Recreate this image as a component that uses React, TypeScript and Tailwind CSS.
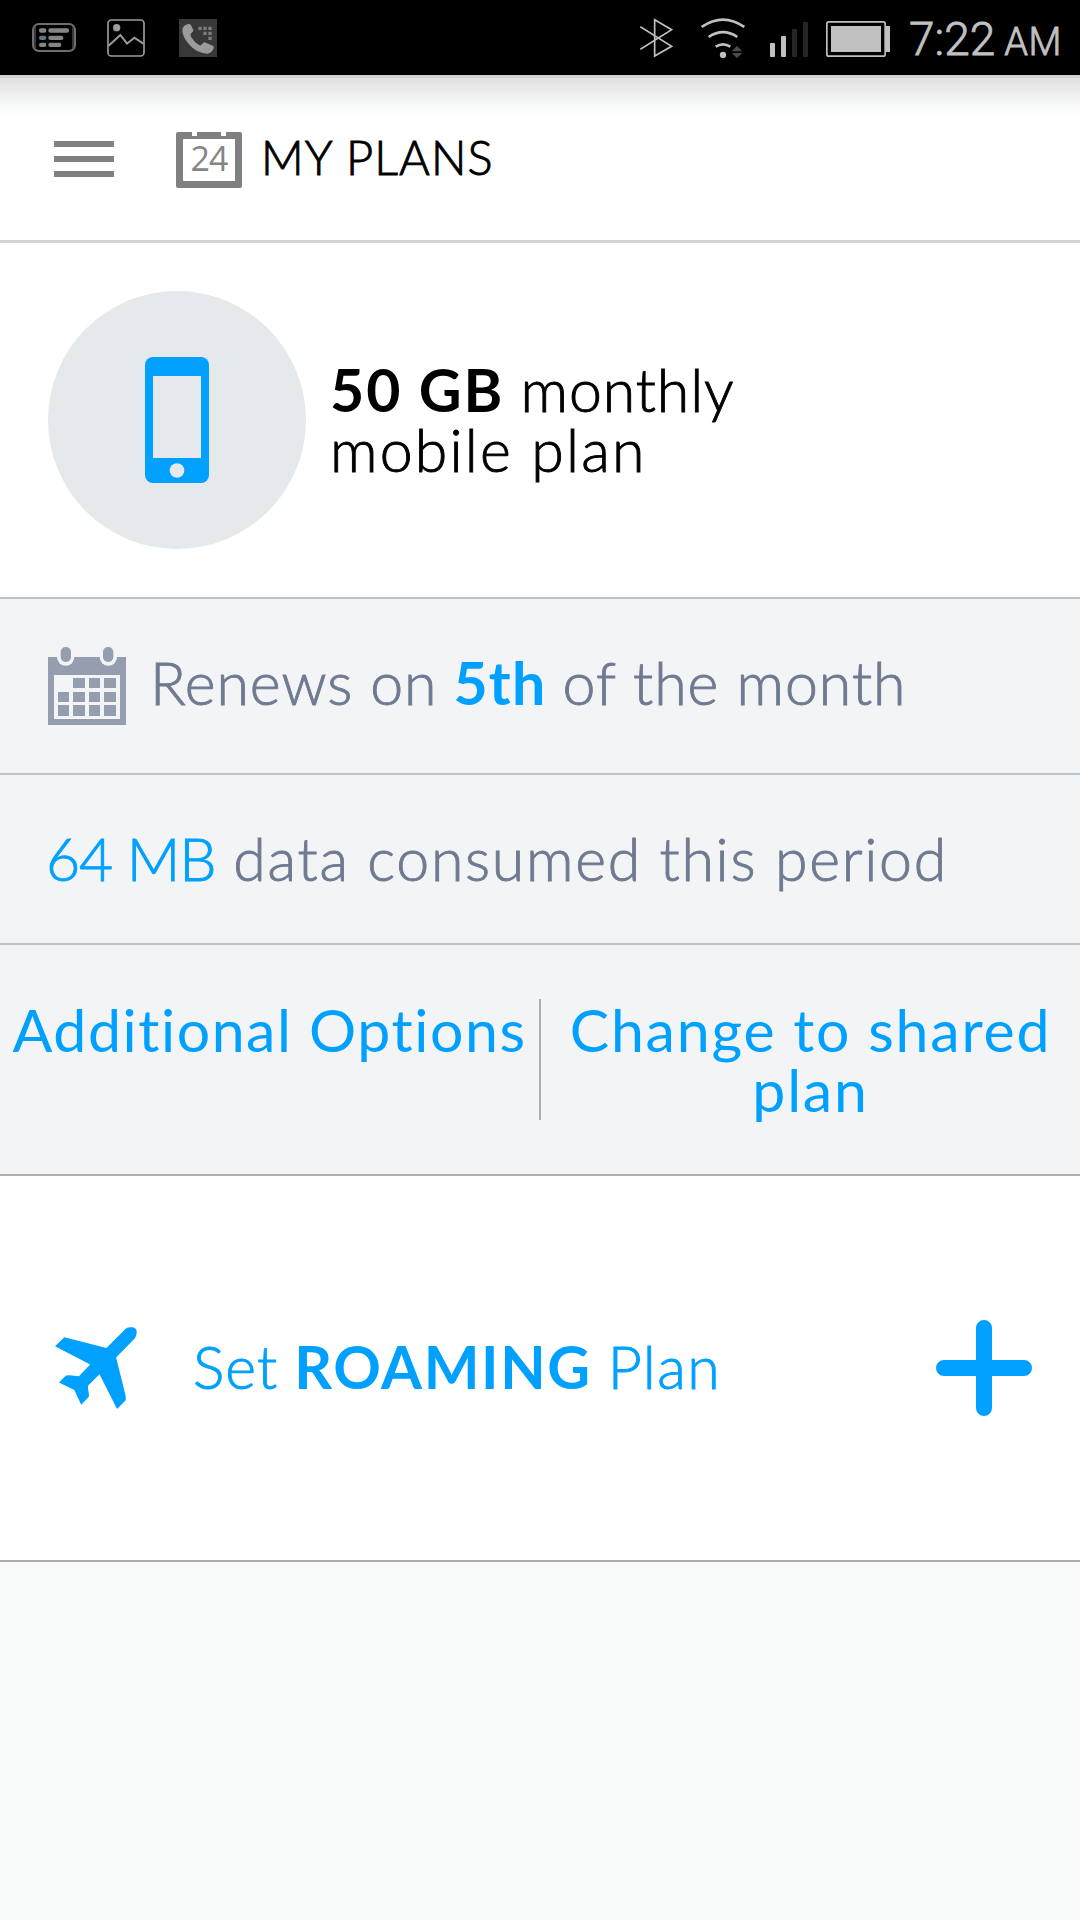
import React from 'react';

const NotificationIcons = () => (
    <div className="flex items-center">
        <svg className="w-11 h-[29px]" viewBox="96 67 132 87" fill="none">
            <rect x="99" y="70" width="126" height="81" rx="18" stroke="#6e6e6e" strokeWidth="6" />
            <path d="M105 77v67M219 77v67" stroke="#555" strokeWidth="4" />
            <g fill="#858585">
                <rect x="117" y="83" width="22" height="13" rx="6" />
                <rect x="145" y="83" width="62" height="13" rx="6" />
                <rect x="117" y="105" width="22" height="13" rx="6" fill="#5b7586" />
                <rect x="145" y="105" width="45" height="13" rx="6" />
                <rect x="117" y="126" width="22" height="13" rx="6" />
                <rect x="145" y="126" width="39" height="13" rx="6" />
            </g>
        </svg>
        <svg className="ml-[31px] w-[38px] h-[38px]" viewBox="321 54 114 114" fill="none">
            <rect x="324" y="57" width="108" height="108" rx="10" stroke="#9b9b9b" strokeWidth="5" />
            <circle cx="350" cy="80" r="11" fill="#9b9b9b" />
            <path d="M326 134L361 102L381 128L403 110L430 128" stroke="#9b9b9b" strokeWidth="6" />
        </svg>
        <svg className="ml-[34px] w-[38px] h-[38px]" viewBox="537 54 114 114">
            <rect x="537" y="54" width="114" height="114" fill="#383838" />
            <path
                d="M562 70Q569 67 573 73L580 87Q581 92 574 96Q569 100 573 107Q583 124 597 132Q602 135 606 130Q611 121 618 125L638 134Q644 137 640 144Q634 157 621 158Q589 157 564 127Q545 102 547 84Q550 74 562 70Z"
                fill="#9b9b9b"
            />
            <g fill="#7d7d7d">
                <path d="M595 77h10v10h-10zM610 77h10v10h-10zM625 77h10v10h-10z" />
                <path d="M610 92h10v10h-10zM625 92h10v10h-10zM625 107h10v10h-10z" />
            </g>
        </svg>
    </div>
);

const SystemIcons = () => (
    <div className="flex items-center">
        <svg className="w-[33px] h-10" viewBox="122 51 99 120" fill="none">
            <path d="M123 77L217 136L166 165V56L217 86L123 145" stroke="#c0c0c0" strokeWidth="5" />
        </svg>
        <svg className="ml-7 w-11 h-10" viewBox="303 51 132 120" fill="none">
            <g stroke="#c0c0c0" strokeWidth="8">
                <path d="M305 78Q369 34 433 78" />
                <path d="M326 108Q369 79 412 108" />
                <path d="M347 137Q369 123 391 137" />
            </g>
            <circle cx="369" cy="162" r="9.5" fill="#c0c0c0" />
            <path d="M395 151L411 135L427 151ZM395 156L411 171L427 156Z" fill="#4c4c4c" />
        </svg>
        <svg className="ml-[25px] mt-1 w-[38px] h-[35px]" viewBox="510 66 114 105">
            <rect x="510" y="129" width="15" height="42" rx="3" fill="#c0c0c0" />
            <rect x="543" y="108" width="15" height="63" rx="3" fill="#c0c0c0" />
            <rect x="576" y="87" width="15" height="84" rx="3" fill="#262626" />
            <rect x="609" y="66" width="15" height="105" rx="3" fill="#262626" />
        </svg>
        <svg className="ml-[18px] mt-[3px] w-16 h-9" viewBox="678 63 192 108">
            <rect x="680.5" y="65.5" width="175" height="103" rx="6" fill="none" stroke="#c0c0c0" strokeWidth="5" />
            <path d="M693 78h150v78h-150zM857 78h13v78h-13z" fill="#c0c0c0" />
        </svg>
    </div>
);

const StatusBar = () => (
    <div className="flex h-[75px] items-center justify-between bg-black pl-8 pr-[18px]">
        <NotificationIcons />
        <div className="flex items-center font-[Roboto,sans-serif] text-[#c0c0c0] [-webkit-text-stroke:0.8px]">
            <SystemIcons />
            <div className="ml-[19px] flex w-[153px] items-baseline justify-between pt-[5px] leading-[52px] whitespace-nowrap">
                <span className="text-[46px]">7:22</span>
                <span className="text-[38px] tracking-[0.5px]">AM</span>
            </div>
        </div>
    </div>
);

const Header = () => (
    <header className="flex h-[168px] items-start border-t-[3px] border-b-[3px] border-[#d3d3d3] bg-white bg-linear-to-b from-[#dfdfdf] via-[#f9fbfa] via-[28px] to-white to-[42px] pl-[54px]">
        <div className="mt-[63px] flex flex-col gap-[9px]">
            <div className="h-1.5 w-15 bg-[#7f8180]" />
            <div className="h-1.5 w-15 bg-[#7f8180]" />
            <div className="h-1.5 w-15 bg-[#7f8180]" />
        </div>
        <div className="relative ml-[62px] mt-[54px] flex h-14 w-[66px] items-center justify-center rounded-xs border-x-[7px] border-y-[7px] border-[#7f8180] bg-white">
            <span className="absolute -top-[7px] left-[9px] h-1 w-[5px] bg-white" />
            <span className="absolute -top-[7px] left-[38px] h-1 w-[5px] bg-white" />
            <span className="pb-1 font-['Open_Sans',sans-serif] text-[34px] leading-none font-normal tracking-[-1px] text-[#858585] [-webkit-text-stroke:0]">
                24
            </span>
        </div>
        <h1 className="ml-[19px] mt-[51px] text-[47px] leading-14 font-light tracking-[1.1px] whitespace-nowrap">MY PLANS</h1>
    </header>
);

const PhoneBadge = () => (
    <div className="flex size-[258px] shrink-0 items-center justify-center rounded-full bg-[#e5e9ec]">
        <svg className="h-[126px] w-16" viewBox="0 0 64 126">
            <rect width="64" height="126" rx="8" fill="#00a0ff" />
            <rect x="8" y="19" width="48" height="82" fill="#e5e9ec" />
            <circle cx="32" cy="113.5" r="7.3" fill="#e5e9ec" />
        </svg>
    </div>
);

const CalendarIcon = () => (
    <svg className="size-[78px] shrink-0" viewBox="144 171 234 234" fill="#949eae">
        <path d="M144 201h234v204h-234z" />
        <g fill="#f2f4f6">
            <path d="M162 255h198v132h-198z" />
            <rect x="171" y="171" width="52" height="56" rx="26" />
            <rect x="299" y="171" width="52" height="56" rx="26" />
        </g>
        <rect x="182" y="171" width="31" height="45" rx="15" />
        <rect x="309" y="171" width="31" height="45" rx="15" />
        <path d="M219 264h36v30h-36zM267 264h33v30h-33zM312 264h36v30h-36z" />
        <path d="M174 306h33v30h-33zM219 306h36v30h-36zM267 306h33v30h-33zM312 306h36v30h-36z" />
        <path d="M174 345h33v33h-33zM219 345h36v33h-36zM267 345h33v33h-33zM312 345h36v33h-36z" />
    </svg>
);

const PlaneIcon = () => (
    <svg className="size-[82px] shrink-0" viewBox="75 80 247 247">
        <path
            d="M75 138L103 111L230 143L288 85Q296 79 308 81Q318 81 321 92Q322 102 316 114L259 172L288 288V301L262 327L209 222L175 256Q173 262 177 280V290L154 314L133 270L87 247L104 230Q110 224 125 226L147 228L181 193Z"
            fill="#00a0ff"
        />
    </svg>
);

const PlusIcon = () => (
    <svg className="size-24" viewBox="0 0 96 96">
        <path d="M8 48H88M48 8V88" stroke="#00a0ff" strokeWidth="16" strokeLinecap="round" />
    </svg>
);

export default function App() {
    return (
        <div className="flex h-[1920px] w-[1080px] flex-col overflow-hidden bg-[#f8faf9] font-[Lato,sans-serif] text-[59px] leading-[60px] font-light text-black [-webkit-text-stroke:0.9px]">
            <StatusBar />
            <Header />
            <section className="flex h-[354px] items-center bg-white pl-12">
                <PhoneBadge />
                <p className="ml-6 whitespace-nowrap">
                    <b className="font-bold tracking-[2px] [-webkit-text-stroke:0]">50 GB</b>{' '}
                    <span className="tracking-[0.9px]">monthly</span>
                    <br />
                    <span className="tracking-[2.2px]">mobile plan</span>
                </p>
            </section>
            <section className="flex h-[176px] items-center border-t-2 border-[#bac3ca] bg-[#f2f4f6] pl-12 text-[#6f7a91]">
                <CalendarIcon />
                <p className="ml-6 pb-1.5 whitespace-nowrap">
                    <span className="tracking-[0.9px]">Renews on</span>{' '}
                    <b className="font-bold tracking-[1.2px] text-[#00a0ff] [-webkit-text-stroke:0]">5th</b>{' '}
                    <span className="tracking-[1px]">of the month</span>
                </p>
            </section>
            <section className="flex h-[170px] items-center border-t-2 border-[#bac3ca] bg-[#f2f4f6] pl-[46px] text-[#6f7a91]">
                <p className="whitespace-nowrap">
                    <span className="tracking-[-1.2px] text-[#00a0ff]">64 MB</span>
                    <span className="ml-[18px] tracking-[1.7px]">data consumed this period</span>
                </p>
            </section>
            <section className="flex h-[233px] items-start border-t-2 border-b-2 border-t-[#bac3ca] border-b-[#adb0b3] bg-[#f2f4f6] pt-[53px] font-normal text-[#00a0ff] [-webkit-text-stroke:0]">
                <button className="mt-0.5 w-[539px] shrink-0 tracking-[1.55px] whitespace-nowrap">Additional Options</button>
                <div className="mt-px h-[121px] w-0.5 bg-[#adb0b3]" />
                <button className="mt-0.5 flex-1 tracking-[1.8px] whitespace-nowrap">
                    Change to shared
                    <br />
                    plan
                </button>
            </section>
            <section className="flex h-[386px] items-center border-b-2 border-[#adadb0] bg-white pl-[55px] pr-12 text-[#00a0ff]">
                <PlaneIcon />
                <p className="ml-[56px] flex-1 pb-0.5 whitespace-nowrap">
                    <span className="tracking-[1px]">Set</span>{' '}
                    <b className="font-bold tracking-[1.6px] [-webkit-text-stroke:0]">ROAMING</b>{' '}
                    <span className="tracking-[1.4px]">Plan</span>
                </p>
                <PlusIcon />
            </section>
        </div>
    );
}
